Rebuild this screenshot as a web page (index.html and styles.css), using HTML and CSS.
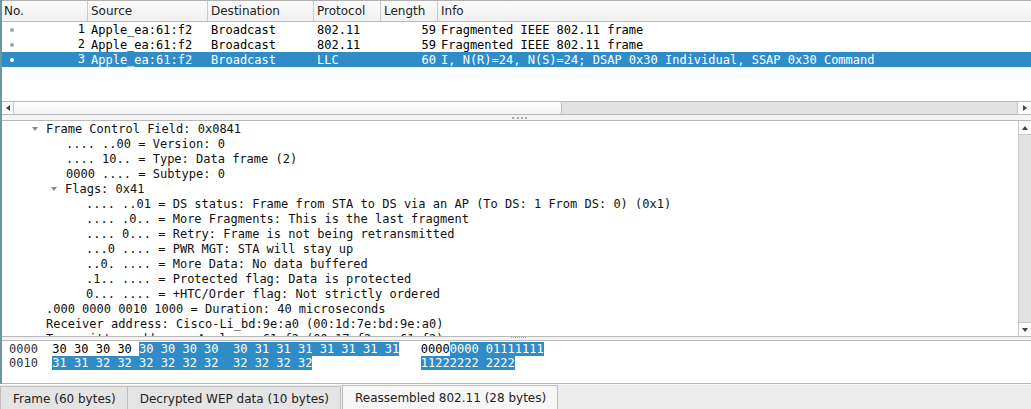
FILE: index.html
```html
<!DOCTYPE html>
<html>
<head>
<meta charset="utf-8">
<link rel="stylesheet" href="styles.css">
</head>
<body>
<div class="app">
  <section class="plist">
    <div class="phead">
      <div class="hc c-no">No.</div>
      <div class="hc c-src">Source</div>
      <div class="hc c-dst">Destination</div>
      <div class="hc c-proto">Protocol</div>
      <div class="hc c-len">Length</div>
      <div class="hc c-info">Info</div>
    </div>
    <div class="prows">
      <div class="prow">
        <div class="pc c-no num"><span class="dot"></span><span>1</span></div>
        <div class="pc c-src">Apple_ea:61:f2</div>
        <div class="pc c-dst">Broadcast</div>
        <div class="pc c-proto">802.11</div>
        <div class="pc c-len right">59</div>
        <div class="pc c-info">Fragmented IEEE 802.11 frame</div>
      </div>
      <div class="prow">
        <div class="pc c-no num"><span class="dot"></span><span>2</span></div>
        <div class="pc c-src">Apple_ea:61:f2</div>
        <div class="pc c-dst">Broadcast</div>
        <div class="pc c-proto">802.11</div>
        <div class="pc c-len right">59</div>
        <div class="pc c-info">Fragmented IEEE 802.11 frame</div>
      </div>
      <div class="prow sel">
        <div class="pc c-no num"><span class="dot"></span><span>3</span></div>
        <div class="pc c-src">Apple_ea:61:f2</div>
        <div class="pc c-dst">Broadcast</div>
        <div class="pc c-proto">LLC</div>
        <div class="pc c-len right">60</div>
        <div class="pc c-info">I, N(R)=24, N(S)=24; DSAP 0x30 Individual, SSAP 0x30 Command</div>
      </div>
    </div>
    <div class="hscroll">
      <div class="sbtn"><span class="arr-l"></span></div>
      <div class="htrack"><div class="hthumb"></div></div>
      <div class="sbtn"><span class="arr-r"></span></div>
    </div>
  </section>

  <div class="splitter"><span class="grip"></span></div>

  <section class="detail">
    <div class="tree">
      <div class="tr l0"><span class="tog"></span>Frame Control Field: 0x0841</div>
      <div class="tr l1">.... ..00 = Version: 0</div>
      <div class="tr l1">.... 10.. = Type: Data frame (2)</div>
      <div class="tr l1">0000 .... = Subtype: 0</div>
      <div class="tr l1t"><span class="tog"></span>Flags: 0x41</div>
      <div class="tr l2">.... ..01 = DS status: Frame from STA to DS via an AP (To DS: 1 From DS: 0) (0x1)</div>
      <div class="tr l2">.... .0.. = More Fragments: This is the last fragment</div>
      <div class="tr l2">.... 0... = Retry: Frame is not being retransmitted</div>
      <div class="tr l2">...0 .... = PWR MGT: STA will stay up</div>
      <div class="tr l2">..0. .... = More Data: No data buffered</div>
      <div class="tr l2">.1.. .... = Protected flag: Data is protected</div>
      <div class="tr l2">0... .... = +HTC/Order flag: Not strictly ordered</div>
      <div class="tr l0p">.000 0000 0010 1000 = Duration: 40 microseconds</div>
      <div class="tr l0p">Receiver address: Cisco-Li_bd:9e:a0 (00:1d:7e:bd:9e:a0)</div>
      <div class="tr l0p">Transmitter address: Apple_ea:61:f2 (00:17:f2:ea:61:f2)</div>
    </div>
    <div class="vscroll">
      <div class="vbtn"><span class="arr-u"></span></div>
      <div class="vtrack"></div>
      <div class="vbtn"><span class="arr-d"></span></div>
    </div>
  </section>

  <div class="splitter2"><span class="grip"></span></div>

  <section class="hex">
    <div class="hl"><span class="off">0000</span>  30 30 30 30 <span class="hi">30 30 30 30  30 31 31 31 31 31 31 31</span>   0000<span class="hi">0000 01111111</span></div>
    <div class="hl"><span class="off">0010</span>  <span class="hi">31 31 32 32 32 32 32 32  32 32 32 32</span>               <span class="hi">11222222 2222</span></div>
  </section>

  <nav class="tabs">
    <div class="tab">Frame (60 bytes)</div>
    <div class="tab">Decrypted WEP data (10 bytes)</div>
    <div class="tab active">Reassembled 802.11 (28 bytes)</div>
  </nav>
</div>
</body>
</html>
```

FILE: styles.css
```css
html, body {
  margin: 0;
  padding: 0;
}
body {
  width: 1031px;
  height: 409px;
  overflow: hidden;
  background: #efefef;
  font-family: "DejaVu Sans", sans-serif;
  font-size: 12px;
  color: #1a1a1a;
}
.app {
  display: flex;
  flex-direction: column;
  height: 409px;
  border-left: 2px solid #6b97a3;
  box-sizing: border-box;
}

/* packet list */
.plist {
  height: 115px;
  display: flex;
  flex-direction: column;
  background: #fff;
}
.phead {
  height: 22px;
  box-sizing: border-box;
  display: flex;
  border-top: 1px solid #b0b0b0;
  border-bottom: 1px solid #b8b8b8;
  background: linear-gradient(#fbfbfb, #f0f0f0);
}
.hc {
  line-height: 19px;
  padding-top: 1px;
  padding-left: 3px;
  border-left: 1px solid #c8c8c8;
  box-sizing: border-box;
  white-space: nowrap;
  color: #222;
}
.c-no { width: 85px; }
.c-src { width: 120px; }
.c-dst { width: 106px; }
.c-proto { width: 67px; }
.c-len { width: 57px; }
.c-info { flex: 1; }
.hc.c-no { border-left: none; padding-left: 2px; }

.prows {
  height: 79px;
  font-family: "DejaVu Sans Mono", monospace;
  font-size: 12px;
  color: #000;
}
.prow {
  display: flex;
  height: 15px;
}
.pc {
  box-sizing: border-box;
  white-space: nowrap;
  padding-left: 4px;
  height: 15px;
  line-height: 17px;
}
.pc.num {
  display: flex;
  align-items: center;
  justify-content: space-between;
  padding-left: 8px;
  padding-right: 2px;
}
.pc.right {
  text-align: right;
  padding-left: 0;
  padding-right: 1px;
}
.dot {
  width: 4px;
  height: 4px;
  border-radius: 50%;
  background: #a3a3a3;
}
.prow.sel {
  background: #308cc6;
  color: #fff;
}
.prow.sel .dot { background: #fff; }

.hscroll {
  height: 14px;
  display: flex;
  box-sizing: border-box;
  border-top: 1px solid #b8b8b8;
  border-bottom: 1px solid #b8b8b8;
  background: #fff;
}
.sbtn {
  width: 13px;
  display: flex;
  align-items: center;
  justify-content: center;
  background: #fafafa;
}
.sbtn:first-child { width: 11px; border-right: 1px solid #c8c8c8; }
.sbtn:last-child { border-left: 1px solid #c8c8c8; }
.arr-l {
  width: 0; height: 0;
  border-top: 3px solid transparent;
  border-bottom: 3px solid transparent;
  border-right: 4px solid #444;
}
.arr-r {
  width: 0; height: 0;
  border-top: 3px solid transparent;
  border-bottom: 3px solid transparent;
  border-left: 4px solid #444;
}
.htrack {
  flex: 1;
  background: #e2e2e2;
  display: flex;
}
.hthumb {
  width: 548px;
  box-sizing: border-box;
  background: linear-gradient(#fdfdfd, #f2f2f2);
  border-right: 1px solid #bdbdbd;
  border-radius: 0 2px 2px 0;
}

.splitter {
  height: 5px;
  display: flex;
  justify-content: center;
  align-items: center;
  background: #f4f4f4;
}
.grip {
  width: 15px;
  height: 0;
  border-top: 2px dotted #a9a9a9;
  margin-left: 6px;
}

/* details */
.detail {
  height: 217px;
  display: flex;
  background: #fff;
  border-top: 1px solid #b8b8b8;
  border-bottom: 1px solid #b8b8b8;
  box-sizing: border-box;
}
.tree {
  flex: 1;
  overflow: hidden;
  font-family: "DejaVu Sans Mono", monospace;
  font-size: 12px;
  color: #111;
}
.tr {
  height: 15px;
  line-height: 16px;
  white-space: nowrap;
  display: flex;
  align-items: center;
}
.tr.l0 { padding-left: 28px; }
.tr.l0p { padding-left: 44px; }
.tr.l1 { padding-left: 64px; }
.tr.l1t { padding-left: 47px; }
.tr.l2 { padding-left: 84px; }
.tog {
  width: 16px;
  height: 15px;
  position: relative;
  flex: none;
}
.tog::before {
  content: "";
  position: absolute;
  left: 2px;
  top: 6px;
  border-left: 3px solid transparent;
  border-right: 3px solid transparent;
  border-top: 4px solid #8a8a8a;
}
.vscroll {
  width: 12px;
  display: flex;
  flex-direction: column;
  border-left: 1px solid #c8c8c8;
}
.vbtn {
  height: 13px;
  display: flex;
  align-items: center;
  justify-content: center;
  background: #fafafa;
}
.vbtn:first-child { border-bottom: 1px solid #c8c8c8; }
.vbtn:last-child { border-top: 1px solid #c8c8c8; }
.vtrack {
  flex: 1;
  background: #e2e2e2;
}
.arr-u {
  width: 0; height: 0;
  border-left: 3px solid transparent;
  border-right: 3px solid transparent;
  border-bottom: 4px solid #444;
}
.arr-d {
  width: 0; height: 0;
  border-left: 3px solid transparent;
  border-right: 3px solid transparent;
  border-top: 4px solid #444;
}

.splitter2 {
  height: 3px;
  display: flex;
  justify-content: center;
  align-items: flex-start;
  background: #f4f4f4;
}
.splitter2 .grip { border-top-width: 1px; margin-left: 4px; }

/* hex */
.hex {
  height: 44px;
  box-sizing: border-box;
  background: #fff;
  border-top: 1px solid #b8b8b8;
  border-bottom: 1px solid #b8b8b8;
  padding-left: 7px;
  padding-top: 1px;
  font-family: "DejaVu Sans Mono", monospace;
  font-size: 12px;
  color: #000;
}
.hl {
  height: 14px;
  line-height: 15px;
  white-space: pre;
}
.off { color: #333; }
.hi {
  background: #308cc6;
  color: #fff;
}

/* tabs */
.tabs {
  height: 25px;
  display: flex;
  align-items: flex-end;
  background: #ececec;
  border-top: 1px solid #f8f8f8;
  box-sizing: border-box;
  margin-left: -2px;
}
.tab {
  height: 23px;
  line-height: 24px;
  padding: 0 11px 0 12px;
  box-sizing: border-box;
  background: #e4e4e4;
  border: 1px solid #bdbdbd;
  border-bottom: none;
  white-space: nowrap;
  color: #222;
}
.tab + .tab { border-left: none; }
.tab.active {
  height: 24px;
  background: #f6f6f6;
  border-left: 1px solid #bdbdbd;
  margin-left: 1px;
}
```
